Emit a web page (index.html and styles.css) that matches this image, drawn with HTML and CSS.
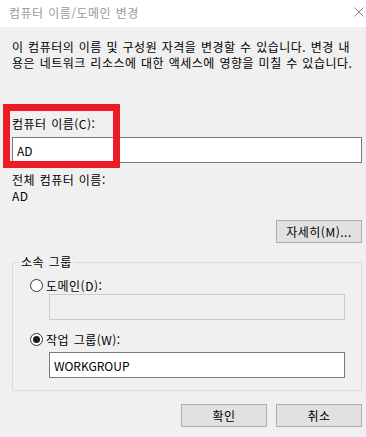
FILE: index.html
```html
<!DOCTYPE html>
<html lang="ko">
<head>
    <meta charset="UTF-8">
    <meta name="viewport" content="width=device-width, initial-scale=1.0">
    <title>컴퓨터 이름/도메인 변경</title>
    <link rel="stylesheet" href="styles.css">
</head>
<body>
    <div class="titlebar">
        <span class="title">컴퓨터 이름/도메인 변경</span>
        <svg class="close" width="10" height="10" viewBox="0 0 10 10">
            <path d="M0.5 0.5 L9.5 9.5 M9.5 0.5 L0.5 9.5" stroke="#8a8a8a" stroke-width="1" fill="none"/>
        </svg>
    </div>

    <div class="content">
        <p class="intro">이 컴퓨터의 이름 및 구성원 자격을 변경할 수 있습니다. 변경 내<br>용은 네트워크 리소스에 대한 액세스에 영향을 미칠 수 있습니다.</p>

        <div class="name-field">
            <label for="compName">컴퓨터 이름(C):</label>
            <input type="text" id="compName" class="textbox" value="AD">
            <div class="highlight"></div>
        </div>

        <div class="full-name">
            전체 컴퓨터 이름:<br>AD
        </div>

        <div class="more-row">
            <button class="btn">자세히(M)...</button>
        </div>

        <fieldset class="member">
            <legend>소속 그룹</legend>
            <label class="radio"><span class="circle"></span>도메인(D):</label>
            <input type="text" class="textbox group-input" disabled>
            <label class="radio radio-second"><span class="circle checked"></span>작업 그룹(W):</label>
            <input type="text" class="textbox group-input workgroup" value="WORKGROUP">
        </fieldset>

        <div class="actions">
            <button class="btn">확인</button>
            <button class="btn">취소</button>
        </div>
    </div>
</body>
</html>
```

FILE: styles.css
```css
body {
    margin: 0;
    background-color: #f0f0f0;
    font-family: "Noto Sans CJK KR", "Liberation Sans", sans-serif;
    font-size: 12px;
    letter-spacing: 0.5px;
    word-spacing: 0.7px;
    color: #000;
}

.titlebar {
    height: 27px;
    background-color: #fff;
    display: flex;
    align-items: center;
    justify-content: space-between;
    padding: 0 2px 0 9px;
}

.title {
    color: #999;
    font-size: 12px;
    line-height: 16px;
    margin-top: -1px;
}

.close {
    margin-top: -3px;
}

.content {
    padding: 0 4px 0 12px;
}

.intro {
    margin: 12px 0 0;
    line-height: 16px;
}

.name-field {
    position: relative;
    margin-top: 45px;
}

.name-field label {
    display: block;
    line-height: 16px;
}

.textbox {
    display: block;
    width: 100%;
    height: 26px;
    margin: 5px 0 0;
    padding: 0 4px;
    border: 1px solid #7a7a7a;
    background-color: #fff;
    font-family: inherit;
    font-size: 12px;
    letter-spacing: 0;
    color: #000;
    box-sizing: border-box;
    outline: none;
}

.textbox:disabled {
    background-color: #f0f0f0;
    border-color: #cccccc;
}

.highlight {
    position: absolute;
    top: -12px;
    left: -9px;
    width: 117px;
    height: 64px;
    border: 7px solid #ed1c24;
    box-sizing: border-box;
}

.full-name {
    margin-top: 9px;
    line-height: 16px;
}

.more-row {
    display: flex;
    justify-content: flex-end;
    margin-top: 16px;
}

.btn {
    width: 86px;
    height: 23px;
    padding: 0;
    border: 1px solid #adadad;
    background-color: #e1e1e1;
    font-family: inherit;
    font-size: 12px;
    letter-spacing: 0.5px;
    color: #000;
}

.member {
    margin: 11px 0 0;
    padding: 0 0 12px 6px;
    border: 1px solid #dcdcdc;
}

.member legend {
    padding: 0 2px;
    line-height: 16px;
}

.radio {
    display: flex;
    align-items: center;
    gap: 3px;
    height: 16px;
    margin: 7px 0 0 11px;
}

.radio-second {
    margin-top: 11px;
}

.circle {
    width: 13px;
    height: 13px;
    border: 1px solid #333;
    border-radius: 50%;
    background-color: #fff;
    box-sizing: border-box;
    display: flex;
    align-items: center;
    justify-content: center;
}

.circle.checked::after {
    content: "";
    width: 7px;
    height: 7px;
    border-radius: 50%;
    background-color: #1a1a1a;
}

.group-input {
    width: calc(100% - 46px);
    margin: 1px 0 0 30px;
}

.group-input.workgroup {
    margin-top: 5px;
}

.actions {
    display: flex;
    justify-content: flex-end;
    gap: 9px;
    margin-top: 13px;
}
```
